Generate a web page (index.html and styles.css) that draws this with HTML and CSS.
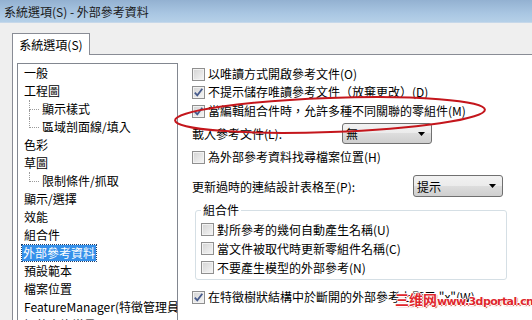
FILE: index.html
```html
<!DOCTYPE html>
<html lang="zh-Hant">
<head>
    <meta charset="UTF-8">
    <title>系統選項(S) - 外部參考資料</title>
    <link rel="stylesheet" href="styles.css">
</head>
<body>

<div class="window">
    <div class="titlebar">系統選項(S) - 外部參考資料</div>

    <div class="tabs">
        <div class="tab">系統選項(S)</div>
    </div>

    <div class="panel">
        <ul class="tree">
            <li>一般</li>
            <li>工程圖</li>
            <li class="child">顯示樣式</li>
            <li class="child last">區域剖面線/填入</li>
            <li>色彩</li>
            <li>草圖</li>
            <li class="child last">限制條件/抓取</li>
            <li>顯示/選擇</li>
            <li>效能</li>
            <li>組合件</li>
            <li><span class="selected">外部參考資料</span></li>
            <li>預設範本</li>
            <li>檔案位置</li>
            <li>FeatureManager(特徵管理員)</li>
            <li>調整方塊增量</li>
        </ul>

        <div class="options">
            <label class="row r1"><span class="cb"></span>以唯讀方式開啟參考文件(O)</label>
            <label class="row"><span class="cb"><svg width="11" height="11" viewBox="0 0 11 11"><path d="M1.8 5.6 L4.3 8.3 L9.3 1.8" fill="none" stroke="#465a8c" stroke-width="1.8"/></svg></span>不提示儲存唯讀參考文件（放棄更改）(D)</label>
            <label class="row r3"><span class="cb"><svg width="11" height="11" viewBox="0 0 11 11"><path d="M1.8 5.6 L4.3 8.3 L9.3 1.8" fill="none" stroke="#465a8c" stroke-width="1.8"/></svg></span>當編輯組合件時，允許多種不同關聯的零組件(M)</label>

            <div class="field load">
                <span class="field-label w-load">載入參考文件(L):</span>
                <div class="combo"><span>無</span><svg width="7" height="4" viewBox="0 0 7 4"><path d="M0 0 H7 L3.5 4 Z" fill="#000"/></svg></div>
            </div>

            <label class="row find"><span class="cb"></span>為外部參考資料找尋檔案位置(H)</label>

            <div class="field update">
                <span class="field-label w-update">更新過時的連結設計表格至(P):</span>
                <div class="combo"><span>提示</span><svg width="7" height="4" viewBox="0 0 7 4"><path d="M0 0 H7 L3.5 4 Z" fill="#000"/></svg></div>
            </div>

            <fieldset class="group">
                <legend>組合件</legend>
                <label class="row grow"><span class="cb"></span>對所參考的幾何自動產生名稱(U)</label>
                <label class="row grow"><span class="cb"></span>當文件被取代時更新零組件名稱(C)</label>
                <label class="row grow"><span class="cb"></span>不要產生模型的外部參考(N)</label>
            </fieldset>

            <label class="row last-row"><span class="cb"><svg width="11" height="11" viewBox="0 0 11 11"><path d="M1.8 5.6 L4.3 8.3 L9.3 1.8" fill="none" stroke="#465a8c" stroke-width="1.8"/></svg></span>在特徵樹狀結構中於斷開的外部參考上顯示 "x"(W)</label>
        </div>
    </div>

    <svg class="mark" width="532" height="320" viewBox="0 0 532 320">
        <ellipse cx="330" cy="115" rx="155" ry="17" transform="rotate(-2 330 115)" fill="none" stroke="#c4161c" stroke-width="2"/>
    </svg>

    <div class="watermark"><span class="wm-cn">三维网</span><span class="wm-en">www.3dportal.cn</span></div>
</div>

</body>
</html>
```

FILE: styles.css
```css
body {
    margin: 0;
    padding: 0;
    background-color: #efefef;
    font-family: "Noto Sans CJK TC", "Liberation Sans", sans-serif;
    font-size: 12px;
    color: #000;
    overflow: hidden;
}

.window {
    position: relative;
    width: 532px;
    height: 320px;
    overflow: hidden;
}

.titlebar {
    height: 22px;
    line-height: 23px;
    padding-left: 4px;
    font-size: 12px;
    color: #1a1a1a;
    background: linear-gradient(#93b1d1, #a9c6e2 60%, #b5d0e8);
    border-bottom: 1px solid #c6d8ea;
}

.tabs {
    display: flex;
    padding-top: 10px;
    padding-left: 12px;
}

.tab {
    position: relative;
    z-index: 1;
    width: 76px;
    height: 21px;
    line-height: 21px;
    text-align: center;
    background-color: #ffffff;
    border: 1px solid #898c95;
    border-bottom: none;
    margin-bottom: -1px;
}

.panel {
    display: flex;
    margin-left: 12px;
    height: 300px;
    padding: 8px 0 0 4px;
    background-color: #ffffff;
    border-top: 1px solid #898c95;
    border-left: 1px solid #898c95;
}

/* tree list on the left */
.tree {
    list-style: none;
    margin: 0;
    padding: 0;
    width: 159px;
    height: 300px;
    flex-shrink: 0;
    border: 1px solid #828790;
    overflow: hidden;
}

.tree li {
    position: relative;
    height: 18px;
    line-height: 18px;
    padding-left: 6px;
    white-space: nowrap;
}

.tree li.child {
    padding-left: 24px;
}

.tree li.child::before {
    content: "";
    position: absolute;
    left: 11px;
    top: 0;
    width: 9px;
    height: 9px;
    border-left: 1px dotted #9a9a9a;
    border-bottom: 1px dotted #9a9a9a;
}

.tree li.child:not(.last)::after {
    content: "";
    position: absolute;
    left: 11px;
    top: 10px;
    height: 8px;
    border-left: 1px dotted #9a9a9a;
}

.selected {
    display: inline-block;
    margin-left: -2px;
    padding: 0 1px;
    height: 16px;
    line-height: 16px;
    color: #ffffff;
    background-color: #3590ea;
    outline: 1px dotted #1c3f6e;
}

/* option column */
.options {
    display: flex;
    flex-direction: column;
    margin-left: 14px;
    padding-top: 2px;
}

.row {
    display: flex;
    align-items: center;
    height: 18px;
    line-height: 18px;
    white-space: nowrap;
}

.r3 {
    margin-top: 1px;
}

.cb {
    display: flex;
    align-items: center;
    justify-content: center;
    width: 11px;
    height: 11px;
    margin-right: 3px;
    border: 1px solid #8f8f8f;
    background: linear-gradient(135deg, #d3d3d3, #f6f6f6);
    box-shadow: inset 0 0 0 1px #f2f2f2;
}

.field {
    display: flex;
    align-items: center;
    white-space: nowrap;
}

.field-label {
    flex-shrink: 0;
}

.w-load {
    width: 150px;
}

.w-update {
    width: 221px;
}

.load {
    margin-top: 3px;
    height: 21px;
}

.find {
    margin-top: 4px;
}

.update {
    margin-top: 9px;
    height: 22px;
}

.combo {
    display: flex;
    align-items: center;
    justify-content: space-between;
    box-sizing: border-box;
    width: 90px;
    height: 100%;
    padding: 0 6px 0 3px;
    border: 1px solid #707070;
    border-radius: 3px;
    background: linear-gradient(#f2f2f2, #ebebeb 50%, #dddddd 50%, #cfcfcf);
}

.group {
    margin: 4px 0 0 3px;
    padding: 1px 0 2px 5px;
    width: 305px;
    border: 1px solid #d5dfe5;
    border-radius: 3px;
}

.group legend {
    padding: 0 2px;
    line-height: 18px;
}

.grow {
    height: 19px;
}

.last-row {
    margin-top: 8px;
}

/* red ring drawn over the screenshot */
.mark {
    position: absolute;
    left: 0;
    top: 0;
    pointer-events: none;
}

.watermark {
    position: absolute;
    left: 395px;
    top: 289px;
    display: flex;
    align-items: baseline;
    color: #e0262c;
    font-weight: bold;
    white-space: nowrap;
    text-shadow: 1px 0 0 #fff, -1px 0 0 #fff, 0 1px 0 #fff, 0 -1px 0 #fff, 1px 1px 1px #b01218;
}

.wm-cn {
    font-size: 14px;
}

.wm-en {
    font-family: "DejaVu Sans", sans-serif;
    font-size: 11px;
    letter-spacing: -0.6px;
}
```
